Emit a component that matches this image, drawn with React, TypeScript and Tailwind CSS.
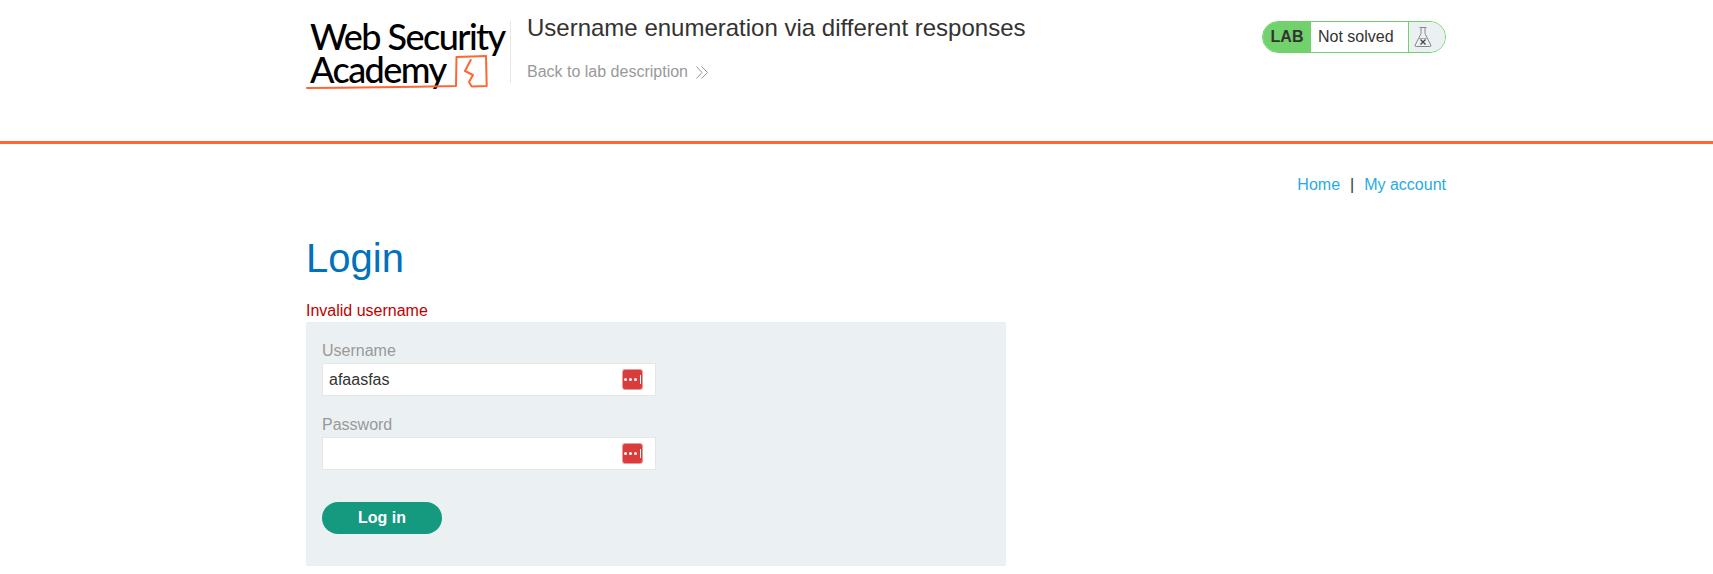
const FlaskIcon = () => (
  <svg width="18" height="22" viewBox="0 0 18 22" fill="none" stroke="#888" strokeWidth="1">
    <path d="M5.500 1.500h7M7 1.500v6L1.200 19q-.7 1.500 1 1.500h13.600q1.700 0 1-1.500L11 7.500v-6" />
    <path d="M4.500 12.500h9" stroke="#aaa" />
    <path d="M6.500 13.500l5 5M11.500 13.500l-5 5" stroke="#444" strokeWidth="1.300" />
  </svg>
);

const ChevronsIcon = () => (
  <svg width="12" height="13" viewBox="0 0 12 13" fill="none" stroke="#999" strokeWidth="1">
    <path d="M.5.500l5.500 6-5.500 6M5.500.500l6 6-6 6" />
  </svg>
);

const PassIcon = () => (
  <span className="flex h-[21px] w-[21px] items-center justify-center gap-[2px] rounded-[3px] border border-[#eb9a98] bg-[#d93d3b]">
    <span className="h-[3px] w-[3px] rounded-full bg-white" />
    <span className="h-[3px] w-[3px] rounded-full bg-white" />
    <span className="h-[3px] w-[3px] rounded-full bg-white" />
    <span className="ml-[1px] h-[9px] w-[1px] bg-white" />
  </span>
);

const Logo = () => (
  <div className="relative h-[76px] w-[204px] shrink-0 pt-[6px] pl-[4px] font-['Lato',sans-serif] text-[36px] leading-[33px] font-medium tracking-[-1.550px] text-black">
    <div className="whitespace-nowrap">Web Security</div>
    <div className="whitespace-nowrap">Academy</div>
    <svg className="absolute top-0 left-0" width="204" height="76" viewBox="0 0 204 76" fill="none" stroke="#ff6633" strokeLinecap="round" strokeLinejoin="round">
      <path d="M1 74 Q70 73.500 150 72 L150.500 43 L180 42 L180.700 72 L165.700 72.500 L163 68 L167 61 L159 57 L164.700 46" strokeWidth="2" />
    </svg>
  </div>
);

const Field = ({ label, value }: { label: string; value: string }) => (
  <div>
    <div className="text-base leading-[19px] text-[#999]">{label}</div>
    <div className="mt-[3px] flex h-[33px] w-[334px] items-center justify-between border border-[#e6e6e6] bg-white pr-[12px] pl-[6px] text-base text-[#333332]">
      <span>{value}</span>
      <PassIcon />
    </div>
  </div>
);

export default function App() {
  return (
    <div className="min-h-[574px] bg-white font-['Liberation_Sans',Arial,sans-serif] text-base text-[#333332]">
      <header className="h-[144px] border-b-[3px] border-[#ff6633]">
        <div className="ml-[306px] flex w-[1140px] pt-[14px]">
          <Logo />
          <div className="mt-[7px] h-[62px] border-l border-[#e6e6e6]" />
          <div className="ml-[16px] flex-1">
            <h2 className="text-[24px] leading-[28px] text-[#333332]">Username enumeration via different responses</h2>
            <a className="mt-[18px] flex items-center gap-[8px] text-base text-[#999]">
              Back to lab description
              <ChevronsIcon />
            </a>
          </div>
          <div className="mt-[7px] flex h-[32px] w-[184px] items-stretch overflow-hidden rounded-full border border-[#70d16d]">
            <div className="flex w-[48px] items-center justify-center bg-[#70d16d] font-bold">LAB</div>
            <div className="flex flex-1 items-center pl-[7px]">Not solved</div>
            <div className="flex w-[37px] items-center border-l border-[#70d16d] bg-[#ebf0f2] pl-[5px]">
              <FlaskIcon />
            </div>
          </div>
        </div>
      </header>

      <main className="ml-[306px] w-[1140px]">
        <nav className="flex justify-end gap-[10px] pt-[31px] text-base leading-[19px]">
          <a className="text-[#29abe2]">Home</a>
          <span>|</span>
          <a className="text-[#29abe2]">My account</a>
        </nav>
        <h1 className="mt-[41px] text-[40px] leading-[46px] text-[#0071bc]">Login</h1>
        <p className="mt-[21px] mb-[2px] text-base leading-[18px] text-[#c00000]">Invalid username</p>
        <form className="h-[244px] w-[700px] bg-[#ebf0f2] px-[16px] pt-[19px]">
          <Field label="Username" value="afaasfas" />
          <div className="mt-[19px]">
            <Field label="Password" value="" />
          </div>
          <button type="button" className="mt-[32px] block h-[32px] w-[120px] rounded-full bg-[#159a80] text-base font-bold text-white">
            Log in
          </button>
        </form>
      </main>
    </div>
  );
}
